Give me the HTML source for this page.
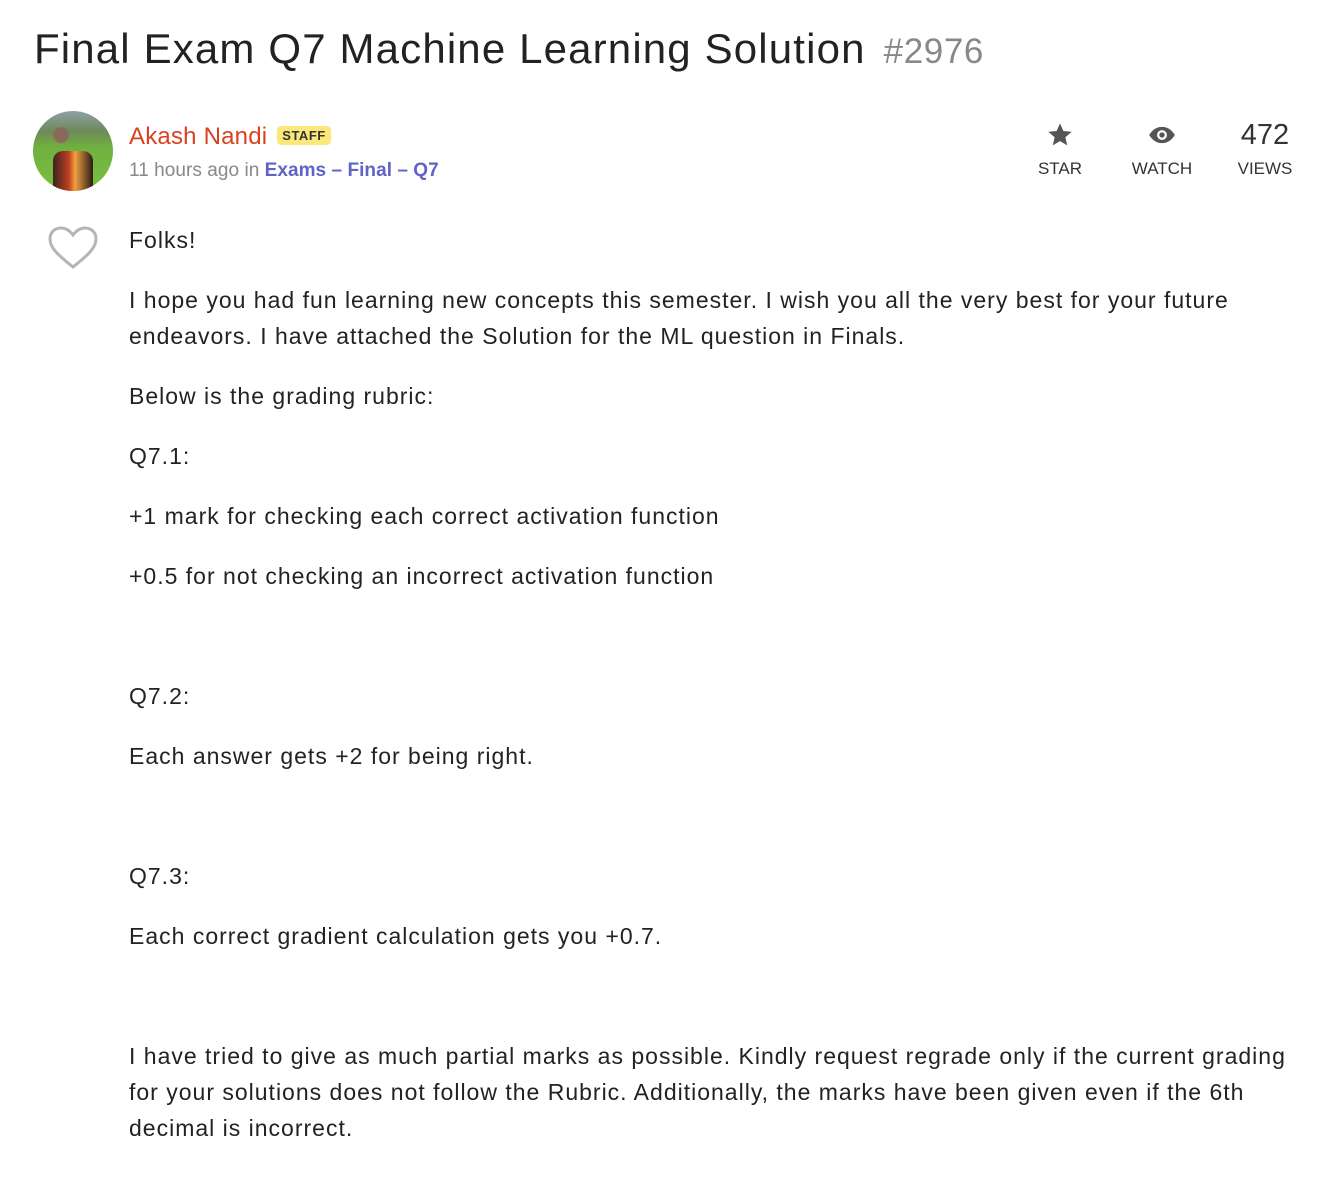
<!DOCTYPE html>
<html><head><meta charset="utf-8"><style>
body{margin:0;background:#fff;font-family:"Liberation Sans",sans-serif;color:#222;width:1334px;height:1186px;overflow:hidden;position:relative}
h1{position:absolute;left:34px;top:25px;margin:0;font-weight:400;font-size:42px;letter-spacing:1.15px;color:#222;white-space:nowrap}
h1 span{color:#888;font-size:35px;margin-left:18px;letter-spacing:0.6px}
.av{position:absolute;left:33px;top:111px;width:80px;height:80px;border-radius:50%;background:radial-gradient(circle at 35% 30%,#8a6b5a 0 10%,transparent 11%),linear-gradient(180deg,#8fa0a8 0%,#6e8a5a 25%,#6fb040 45%,#7cc040 100%);overflow:hidden}
.av:after{content:"";position:absolute;left:20px;top:40px;width:40px;height:40px;border-radius:10px 10px 0 0;background:linear-gradient(90deg,#3a2420,#c04020 40%,#f0a040 55%,#2a1a18)}
.name{position:absolute;left:129px;top:123px;font-size:24px;letter-spacing:0.2px;color:#d9411f;white-space:nowrap}
.staff{display:inline-block;background:#fbe77a;color:#333;font-size:13px;font-weight:700;padding:2px 5px;border-radius:4px;vertical-align:4px;margin-left:10px;letter-spacing:0.5px}
.meta{position:absolute;left:129px;top:160px;font-size:19px;letter-spacing:0.05px;color:#888;white-space:nowrap}
.meta b{color:#5f63c6;font-weight:600}
.stat{position:absolute;top:118px;text-align:center;font-size:17px;color:#333}
.stat .l{position:absolute;top:41px;left:50%;transform:translateX(-50%)}
.body{position:absolute;left:129px;top:222px;width:1165px;font-size:23px;line-height:36px;letter-spacing:1px;color:#222}
.body p{margin:0 0 24px;min-height:36px}
</style></head><body>
<h1>Final Exam Q7 Machine Learning Solution<span>#2976</span></h1>
<div class="av"></div>
<div class="name">Akash Nandi<span class="staff">STAFF</span></div>
<div class="meta">11 hours ago in <b>Exams – Final – Q7</b></div>
<div class="stat" style="left:1040px;width:40px"><svg width="28" height="28" viewBox="0 0 24 24" style="margin-top:3px"><path d="M12 2l2.9 6.6 7.1.6-5.4 4.7 1.6 7-6.2-3.7-6.2 3.7 1.6-7L2 9.2l7.1-.6z" fill="#555"/></svg><div class="l">STAR</div></div>
<div class="stat" style="left:1142px;width:40px"><svg width="28" height="28" viewBox="0 0 24 24" style="margin-top:3px"><path d="M1 12C4 7 8 5 12 5s8 2 11 7c-3 5-7 7-11 7S4 17 1 12z" fill="#555"/><circle cx="12" cy="12" r="4.2" fill="#fff"/><circle cx="12" cy="12" r="2.3" fill="#555"/></svg><div class="l">WATCH</div></div>
<div class="stat" style="left:1238px;width:54px"><div style="font-size:29px;line-height:34px">472</div><div class="l">VIEWS</div></div>
<svg style="position:absolute;left:48px;top:226px" width="50" height="44" viewBox="0 0 50 44"><path d="M25 41C10 29 2 22 2 13 2 6 7 2 13 2c5 0 9 3 12 7 3-4 7-7 12-7 6 0 11 4 11 11 0 9-8 16-23 28z" fill="none" stroke="#b5b5b5" stroke-width="3"/></svg>
<div class="body">
<p>Folks!</p>
<p>I hope you had fun learning new concepts this semester. I wish you all the very best for your future endeavors. I have attached the Solution for the ML question in Finals.</p>
<p>Below is the grading rubric:</p>
<p>Q7.1:</p>
<p>+1 mark for checking each correct activation function</p>
<p>+0.5 for not checking an incorrect activation function</p>
<p></p>
<p>Q7.2:</p>
<p>Each answer gets +2 for being right.</p>
<p></p>
<p>Q7.3:</p>
<p>Each correct gradient calculation gets you +0.7.</p>
<p></p>
<p>I have tried to give as much partial marks as possible. Kindly request regrade only if the current grading for your solutions does not follow the Rubric. Additionally, the marks have been given even if the 6th decimal is incorrect.</p>
</div>
</body></html>
